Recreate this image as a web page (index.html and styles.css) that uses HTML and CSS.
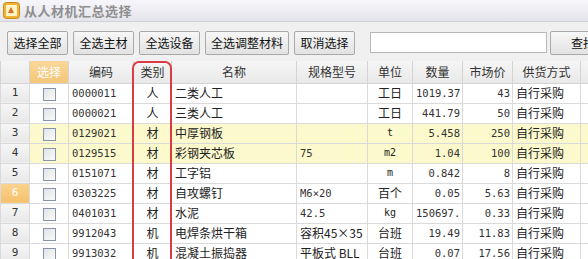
FILE: index.html
```html
<!DOCTYPE html>
<html lang="zh-CN">
<head>
    <meta charset="UTF-8">
    <title>从人材机汇总选择</title>
    <link rel="stylesheet" href="styles.css">
</head>
<body>
    <div class="window">
        <div class="titlebar">
            <svg class="app-icon" width="17" height="17" viewBox="0 0 17 17">
                <rect x="0.5" y="0.5" width="16" height="16" rx="3" fill="#f2b233" stroke="#c98a1a"/>
                <rect x="3" y="3" width="11" height="11" rx="1" fill="#fff3c8"/>
                <path d="M5 11 L8 5 L11 11 Z" fill="#d9701c"/>
            </svg>
            <span class="title">从人材机汇总选择</span>
        </div>

        <div class="toolbar">
            <button class="btn btn-4">选择全部</button>
            <button class="btn btn-4">全选主材</button>
            <button class="btn btn-4">全选设备</button>
            <button class="btn btn-6">全选调整材料</button>
            <button class="btn btn-4">取消选择</button>
            <input type="text" class="search">
            <button class="btn btn-find">查找</button>
        </div>

        <div class="grid-wrap">
            <table class="grid">
                <colgroup>
                    <col class="c-no">
                    <col class="c-chk">
                    <col class="c-code">
                    <col class="c-type">
                    <col class="c-name">
                    <col class="c-spec">
                    <col class="c-unit">
                    <col class="c-qty">
                    <col class="c-price">
                    <col class="c-supply">
                    <col class="c-rest">
                </colgroup>
                <thead>
                    <tr>
                        <th class="corner"></th>
                        <th class="sel-head">选择</th>
                        <th>编码</th>
                        <th>类别</th>
                        <th>名称</th>
                        <th>规格型号</th>
                        <th>单位</th>
                        <th>数量</th>
                        <th>市场价</th>
                        <th>供货方式</th>
                        <th></th>
                    </tr>
                </thead>
                <tbody>
                    <tr>
                        <td class="no">1</td><td class="chk"><span class="box"></span></td>
                        <td class="num-l">0000011</td><td class="mid">人</td><td>二类人工</td><td></td>
                        <td class="mid">工日</td><td class="num">1019.37</td><td class="num">43</td><td>自行采购</td><td></td>
                    </tr>
                    <tr>
                        <td class="no">2</td><td class="chk"><span class="box"></span></td>
                        <td class="num-l">0000021</td><td class="mid">人</td><td>三类人工</td><td></td>
                        <td class="mid">工日</td><td class="num">441.79</td><td class="num">50</td><td>自行采购</td><td></td>
                    </tr>
                    <tr class="main">
                        <td class="no">3</td><td class="chk"><span class="box"></span></td>
                        <td class="num-l">0129021</td><td class="mid">材</td><td>中厚钢板</td><td></td>
                        <td class="mid small">t</td><td class="num">5.458</td><td class="num">250</td><td>自行采购</td><td></td>
                    </tr>
                    <tr class="main">
                        <td class="no">4</td><td class="chk"><span class="box"></span></td>
                        <td class="num-l">0129515</td><td class="mid">材</td><td>彩钢夹芯板</td><td class="num-l">75</td>
                        <td class="mid small">m2</td><td class="num">1.04</td><td class="num">100</td><td>自行采购</td><td></td>
                    </tr>
                    <tr>
                        <td class="no">5</td><td class="chk"><span class="box"></span></td>
                        <td class="num-l">0151071</td><td class="mid">材</td><td>工字铝</td><td></td>
                        <td class="mid small">m</td><td class="num">0.842</td><td class="num">8</td><td>自行采购</td><td></td>
                    </tr>
                    <tr>
                        <td class="no current">6</td><td class="chk"><span class="box"></span></td>
                        <td class="num-l">0303225</td><td class="mid">材</td><td>自攻螺钉</td><td class="num-l">M6×20</td>
                        <td class="mid">百个</td><td class="num">0.05</td><td class="num">5.63</td><td>自行采购</td><td></td>
                    </tr>
                    <tr>
                        <td class="no">7</td><td class="chk"><span class="box"></span></td>
                        <td class="num-l">0401031</td><td class="mid">材</td><td>水泥</td><td class="num-l">42.5</td>
                        <td class="mid small">kg</td><td class="num">150697.</td><td class="num">0.33</td><td>自行采购</td><td></td>
                    </tr>
                    <tr>
                        <td class="no">8</td><td class="chk"><span class="box"></span></td>
                        <td class="num-l">9912043</td><td class="mid">机</td><td>电焊条烘干箱</td><td>容积45×35</td>
                        <td class="mid">台班</td><td class="num">19.49</td><td class="num">11.83</td><td>自行采购</td><td></td>
                    </tr>
                    <tr>
                        <td class="no">9</td><td class="chk"><span class="box"></span></td>
                        <td class="num-l">9913032</td><td class="mid">机</td><td>混凝土振捣器</td><td>平板式 BLL</td>
                        <td class="mid">台班</td><td class="num">0.07</td><td class="num">17.56</td><td>自行采购</td><td></td>
                    </tr>
                </tbody>
            </table>
            <div class="highlight"></div>
        </div>
    </div>
</body>
</html>
```

FILE: styles.css
```css
* {
    box-sizing: border-box;
    margin: 0;
    padding: 0;
}

body {
    width: 588px;
    height: 259px;
    overflow: hidden;
    background: #f0f0f0;
    font-family: "Noto Sans CJK SC", "DejaVu Sans", sans-serif;
    font-size: 12px;
    color: #222;
}

.window {
    width: 588px;
    overflow: hidden;
}

/* title bar */
.titlebar {
    height: 22px;
    display: flex;
    align-items: center;
    gap: 4px;
    padding-left: 3px;
    background: linear-gradient(#f6f6fa, #e4e4ec);
    border-bottom: 1px solid #d0d0d8;
}

.title {
    font-size: 13px;
    font-weight: bold;
    color: #8f8f8f;
    letter-spacing: 0.5px;
}

/* toolbar */
.toolbar {
    height: 39px;
    display: flex;
    align-items: center;
    padding: 2px 0 0 7px;
    background: #f0f0f0;
    overflow: hidden;
}

.btn {
    flex-shrink: 0;
    height: 24px;
    font-family: "Noto Sans CJK SC", sans-serif;
    font-size: 12px;
    color: #111;
    background: linear-gradient(#f7f7f7, #e2e2e2);
    border: 1px solid #a9a9a9;
    border-radius: 2px;
    margin-right: 5px;
}

.btn-4 { width: 61px; }
.btn-6 { width: 84px; }

.search {
    flex-shrink: 0;
    width: 177px;
    height: 21px;
    margin-left: 10px;
    margin-right: 3px;
    border: 1px solid #b8b8b8;
    background: #fff;
}

.btn-find {
    width: 60px;
    padding-left: 6px;
    margin-right: 0;
}

/* grid */
.grid-wrap {
    position: relative;
    background: #fff;
}

.grid {
    table-layout: fixed;
    border-collapse: collapse;
    width: 620px;
}

.c-no { width: 29px; }
.c-chk { width: 39px; }
.c-code { width: 65px; }
.c-type { width: 38px; }
.c-name { width: 125px; }
.c-spec { width: 71px; }
.c-unit { width: 45px; }
.c-qty { width: 50px; }
.c-price { width: 50px; }
.c-supply { width: 68px; }
.c-rest { width: 40px; }

.grid th {
    height: 22px;
    font-weight: normal;
    font-size: 12px;
    color: #333;
    background: linear-gradient(#f5f5f5, #e9e9e9);
    border: 1px solid #d4d4d4;
    border-top: none;
    text-align: center;
    white-space: nowrap;
}

.grid th.sel-head {
    background: linear-gradient(#f9d79a, #f3c677);
    color: #fff;
}

.grid td {
    height: 20px;
    border: 1px solid #dadada;
    padding: 0 3px;
    white-space: nowrap;
    overflow: hidden;
    line-height: 16px;
}

.grid tr.main td {
    background: #fcf9cc;
}

.grid td.no,
.grid tr.main td.no {
    text-align: center;
    background: linear-gradient(#f6f6f6, #e8e8e8);
    color: #333;
    font-family: "DejaVu Sans Mono", monospace;
    font-size: 11px;
}

.grid td.no.current {
    background: linear-gradient(#fad38e, #f5c16c);
    color: #fff;
}

.grid td.chk {
    text-align: center;
    padding: 0;
}

.box {
    display: inline-block;
    width: 13px;
    height: 13px;
    vertical-align: middle;
    border: 1px solid #8696a8;
    background: linear-gradient(135deg, #dfe3e8, #fbfbfb);
}

.grid td.mid {
    text-align: center;
}

.grid td.small {
    font-family: "DejaVu Sans Mono", monospace;
    font-size: 10px;
}

.grid td.num,
.grid td.num-l {
    font-family: "DejaVu Sans Mono", monospace;
    font-size: 10.5px;
    color: #333;
}

.grid td.num {
    text-align: right;
    padding-right: 2px;
}

.highlight {
    position: absolute;
    left: 132px;
    top: 0;
    width: 40px;
    height: 220px;
    border: 2px solid #dc3b44;
    border-radius: 7px;
    pointer-events: none;
}
```
